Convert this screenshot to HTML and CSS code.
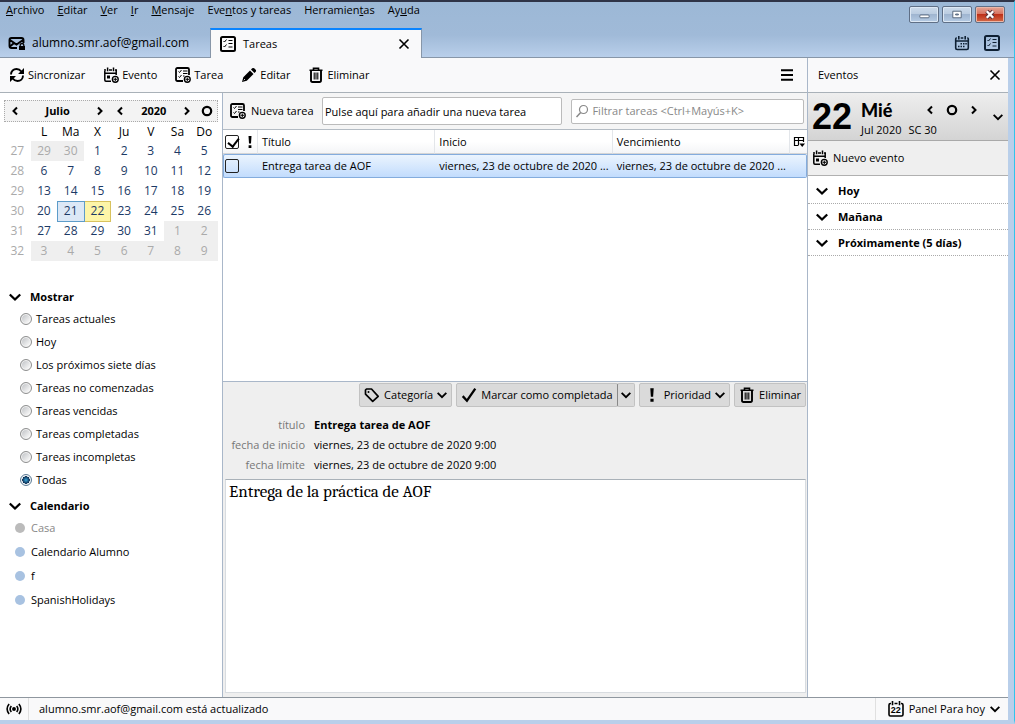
FILE: index.html
```html
<!DOCTYPE html>
<html lang="es">
<head>
  <meta charset="UTF-8" />
  <title>Tareas</title>
  <link rel="stylesheet" href="styles.css">
</head>
<body>
  <!-- Iconos compartidos -->
  <svg class="sprite" aria-hidden="true">
    <symbol id="i-down" viewBox="0 0 12 12"><path d="M.8 3.500 6 8.500l5.200-5" fill="none" stroke="currentColor" stroke-width="2.300"/></symbol>
    <symbol id="i-left" viewBox="0 0 12 12"><path d="M8 2.500 4.500 6 8 9.500" fill="none" stroke="currentColor" stroke-width="2"/></symbol>
    <symbol id="i-right" viewBox="0 0 12 12"><path d="M4 2.500 7.500 6 4 9.500" fill="none" stroke="currentColor" stroke-width="2"/></symbol>
    <symbol id="i-circle" viewBox="0 0 12 12"><circle cx="6" cy="6" r="4.200" fill="none" stroke="currentColor" stroke-width="2.200"/></symbol>
    <symbol id="i-close" viewBox="0 0 12 12"><path d="M1.500 1.500l9 9M10.500 1.500l-9 9" fill="none" stroke="currentColor" stroke-width="1.600"/></symbol>
    <symbol id="i-task" viewBox="0 0 16 16"><rect x="1" y="1" width="14" height="14" rx="1.500" fill="none" stroke="currentColor" stroke-width="2"/><path d="M3.500 5l1 1 2-2.500M3.500 10l1 1 2-2.500M8.500 4.500h4M8.500 7.500h4M8.500 11h4" fill="none" stroke="currentColor"/></symbol>
    <symbol id="i-newtask" viewBox="0 0 16 16"><path d="M8 14H2.500Q1 14 1 12.500V2.500Q1 1 2.500 1h10Q14 1 14 2.500V8" fill="none" stroke="currentColor" stroke-width="1.800"/><path d="M3.500 4.500l1 1 2-2.500M3.500 9.500l1 1 2-2.500M8 4h4.500M8 6.500h4.500M8 9h1.500" fill="none" stroke="currentColor"/><circle cx="12.300" cy="12.300" r="2.900" fill="none" stroke="currentColor" stroke-width="1.400"/><path d="M12.300 10.500v3.600M10.500 12.300h3.600" stroke="currentColor"/></symbol>
    <symbol id="i-newevent" viewBox="0 0 16 16"><path d="M8 14.200H3Q1.800 14.200 1.800 13V4M13.200 3V8M1 3h2M6 3h3M12 3h2M4.600.5v3.700M10.500.5v3.700M2 6.200h11" fill="none" stroke="currentColor" stroke-width="1.500"/><path d="M4 8.500h3v3H4z" fill="currentColor"/><circle cx="12.300" cy="12.300" r="2.900" fill="none" stroke="currentColor" stroke-width="1.400"/><path d="M12.300 10.500v3.600M10.500 12.300h3.600" stroke="currentColor"/></symbol>
    <symbol id="i-calendar" viewBox="0 0 16 16"><path d="M2.800 3H2.500Q1.700 3 1.700 4v9q0 1.500 1.500 1.500h9.600q1.500 0 1.500-1.500V4q0-1-.8-1h-.3M1.700 6h12.600M4.800 1v3.500M11.200 1v3.500M6.700 3h2.600" fill="none" stroke="currentColor" stroke-width="1.600"/><path d="M6.500 8h1.500v1.500H6.500zM9 8h1.500v1.500H9zM11.300 8h1.500v1.500h-1.500zM4 10.700h1.500v1.500H4zM6.500 10.700h1.500v1.500H6.500zM9 10.700h1.500v1.500H9z" fill="currentColor"/></symbol>
    <symbol id="i-today" viewBox="0 0 16 16"><path d="M3 2.500H2.500Q1 2.500 1 4v9.500Q1 15 2.500 15h11q1.500 0 1.500-1.500V4q0-1.500-1.500-1.500H13M4.500 0v4.200M11.500 0v4.200M6.500 2.500h3" fill="none" stroke="currentColor" stroke-width="1.600"/></symbol>
    <symbol id="i-trash" viewBox="0 0 16 16"><path d="M1.500 3.200h13M5.500 3V1.300h5V3" fill="none" stroke="currentColor" stroke-width="1.600"/><path d="M3 3.500v9.700Q3 15 4.500 15h7q1.500 0 1.500-1.800V3.500" fill="none" stroke="currentColor" stroke-width="1.900"/><path d="M6.200 5.500v7M8 5.500v7M9.800 5.500v7" stroke="currentColor" stroke-width="1.100"/></symbol>
    <symbol id="i-sync" viewBox="0 0 16 16"><path d="M2 7.500C2 4 4.500 2 7.500 2c2.200 0 3.700 1 4.800 2.500M14 8.500C14 12 11.500 14 8.500 14c-2.200 0-3.700-1-4.800-2.500" fill="none" stroke="currentColor" stroke-width="1.900"/><path d="M15 1v6H9zM1 15V9h6z" fill="currentColor"/></symbol>
    <symbol id="i-pencil" viewBox="0 0 16 16"><path d="M1 15l1.300-4.800L9 3.500 12.500 7l-6.700 6.700zM10 2.500l1.200-1.200q1-.8 2 0l1.500 1.500q.8 1 0 2L13.500 6z" fill="currentColor"/><path d="M2.800 13.200l1-1" stroke="#fff"/></symbol>
    <symbol id="i-mail" viewBox="0 0 18 16"><path d="M9 13H3.500Q1.500 13 1.500 11V5q0-2 2-2h10q2 0 2 2v3M2 5l6.500 4.500L15 5M2 11.500L6 8" fill="none" stroke="currentColor" stroke-width="1.900"/><path d="M11 11h6v4h-6z" fill="currentColor"/><path d="M12.200 11.500V10q0-1.500 1.800-1.500T15.800 10v1.500" fill="none" stroke="currentColor" stroke-width="1.300"/></symbol>
    <symbol id="i-menu" viewBox="0 0 12 12"><path d="M0 1.200h12M0 6h12M0 10.800h12" stroke="currentColor" stroke-width="1.900"/></symbol>
    <symbol id="i-tag" viewBox="0 0 16 16"><path d="M1.500 3v4.200l7.200 7.200 5.500-5L7.500 2H2.500z" fill="none" stroke="currentColor" stroke-width="1.700" stroke-linejoin="round"/><circle cx="4.500" cy="5" r="1" fill="currentColor"/></symbol>
    <symbol id="i-check" viewBox="0 0 14 14"><path d="M1.500 8l3.700 4L12.500 1.500" fill="none" stroke="currentColor" stroke-width="2"/></symbol>
    <symbol id="i-bang" viewBox="0 0 6 14"><path d="M1.500 1h3L4 8.500H2zM1.600 10.300h2.800V13H1.600z" fill="currentColor"/></symbol>
    <symbol id="i-search" viewBox="0 0 14 14"><circle cx="8.500" cy="5.500" r="4" fill="none" stroke="currentColor" stroke-width="1.200"/><path d="M5.700 8.500L1.500 13" stroke="currentColor" stroke-width="1.500"/></symbol>
    <symbol id="i-columns" viewBox="0 0 12 12"><path d="M5.500 9.500h-4v-8h9V6M1.500 4.500h9M5.500 2v7" fill="none" stroke="currentColor" stroke-width="1.200"/><path d="M6.500 7.500H12L9.200 11z" fill="currentColor"/></symbol>
    <symbol id="i-signal" viewBox="0 0 18 14"><circle cx="9" cy="7" r="2.200" fill="currentColor"/><path d="M6 3.500q-2.700 3.500 0 7M12 3.500q2.700 3.500 0 7M3.500 1.500q-4.500 5.500 0 11M14.500 1.500q4.500 5.500 0 11" fill="none" stroke="currentColor" stroke-width="1.800"/></symbol>
  </svg>

  <header class="titlebar">
    <nav class="menubar">
      <a href="#"><u>A</u>rchivo</a>
      <a href="#"><u>E</u>ditar</a>
      <a href="#"><u>V</u>er</a>
      <a href="#"><u>I</u>r</a>
      <a href="#"><u>M</u>ensaje</a>
      <a href="#">Eve<u>n</u>tos y tareas</a>
      <a href="#">Herramien<u>t</u>as</a>
      <a href="#">Ay<u>u</u>da</a>
    </nav>
    <div class="tabs">
      <button class="tab mail-tab"><svg class="icon-mail"><use href="#i-mail"/></svg>alumno.smr.aof@gmail.com</button>
      <div class="tab tab-active">
        <button class="tab-label"><svg class="icon"><use href="#i-task"/></svg>Tareas</button>
        <button class="tab-close" aria-label="Cerrar pestaña"><svg class="icon-sm"><use href="#i-close"/></svg></button>
      </div>
    </div>
    <div class="window-side">
      <div class="window-buttons">
        <button aria-label="Minimizar"><svg viewBox="0 0 30 16"><rect x="10.500" y="8.500" width="10" height="3" rx="1" fill="#fff" stroke="#54647a"/></svg></button>
        <button aria-label="Maximizar"><svg viewBox="0 0 30 16"><path d="M10.500 4.500h9v7h-9zM13.500 7.500h3v1h-3z" fill="#fff" fill-rule="evenodd" stroke="#54647a"/></svg></button>
        <button class="win-close" aria-label="Cerrar"><svg viewBox="0 0 30 16"><path d="M11.500 4.500l7 7M18.500 4.500l-7 7" stroke="#57323a" stroke-width="4.500"/><path d="M11.500 4.500l7 7M18.500 4.500l-7 7" stroke="#fff" stroke-width="2.500"/></svg></button>
      </div>
      <div class="tab-tools">
        <button aria-label="Calendario"><svg class="icon"><use href="#i-calendar"/></svg></button>
        <button aria-label="Tareas"><svg class="icon"><use href="#i-task"/></svg></button>
      </div>
    </div>
  </header>

  <main class="workspace">
    <div class="tasks">
      <div class="toolbar">
        <button><svg class="icon"><use href="#i-sync"/></svg>Sincronizar</button>
        <button><svg class="icon"><use href="#i-newevent"/></svg>Evento</button>
        <button><svg class="icon"><use href="#i-newtask"/></svg>Tarea</button>
        <button><svg class="icon"><use href="#i-pencil"/></svg>Editar</button>
        <button><svg class="icon"><use href="#i-trash"/></svg>Eliminar</button>
        <button class="app-menu" aria-label="Menú"><svg class="icon-sm"><use href="#i-menu"/></svg></button>
      </div>

      <div class="panes">
        <aside class="sidebar">
          <div class="month-header">
            <button aria-label="Mes anterior"><svg class="icon-sm"><use href="#i-left"/></svg></button>
            <span class="month-name">Julio</span>
            <button aria-label="Mes siguiente"><svg class="icon-sm"><use href="#i-right"/></svg></button>
            <button aria-label="Año anterior"><svg class="icon-sm"><use href="#i-left"/></svg></button>
            <span class="year-name">2020</span>
            <button aria-label="Año siguiente"><svg class="icon-sm"><use href="#i-right"/></svg></button>
            <button aria-label="Hoy"><svg class="icon-sm"><use href="#i-circle"/></svg></button>
          </div>
          <table class="month">
            <thead>
              <tr><th></th><th>L</th><th>Ma</th><th>X</th><th>Ju</th><th>V</th><th>Sa</th><th>Do</th></tr>
            </thead>
            <tbody>
              <tr><th>27</th><td class="other">29</td><td class="other">30</td><td>1</td><td>2</td><td>3</td><td>4</td><td>5</td></tr>
              <tr><th>28</th><td>6</td><td>7</td><td>8</td><td>9</td><td>10</td><td>11</td><td>12</td></tr>
              <tr><th>29</th><td>13</td><td>14</td><td>15</td><td>16</td><td>17</td><td>18</td><td>19</td></tr>
              <tr><th>30</th><td>20</td><td class="today">21</td><td class="selected">22</td><td>23</td><td>24</td><td>25</td><td>26</td></tr>
              <tr><th>31</th><td>27</td><td>28</td><td>29</td><td>30</td><td>31</td><td class="other">1</td><td class="other">2</td></tr>
              <tr><th>32</th><td class="other">3</td><td class="other">4</td><td class="other">5</td><td class="other">6</td><td class="other">7</td><td class="other">8</td><td class="other">9</td></tr>
            </tbody>
          </table>

          <button class="section-title"><svg class="icon-sm"><use href="#i-down"/></svg>Mostrar</button>
          <div class="filters">
            <label><input type="radio" name="filter">Tareas actuales</label>
            <label><input type="radio" name="filter">Hoy</label>
            <label><input type="radio" name="filter">Los próximos siete días</label>
            <label><input type="radio" name="filter">Tareas no comenzadas</label>
            <label><input type="radio" name="filter">Tareas vencidas</label>
            <label><input type="radio" name="filter">Tareas completadas</label>
            <label><input type="radio" name="filter">Tareas incompletas</label>
            <label><input type="radio" name="filter" checked>Todas</label>
          </div>

          <button class="section-title"><svg class="icon-sm"><use href="#i-down"/></svg>Calendario</button>
          <ul class="calendars">
            <li class="disabled">Casa</li>
            <li>Calendario Alumno</li>
            <li>f</li>
            <li>SpanishHolidays</li>
          </ul>
        </aside>

        <section class="content">
          <div class="task-list">
            <div class="quick-add">
              <button class="new-task"><svg class="icon"><use href="#i-newtask"/></svg>Nueva tarea</button>
              <input class="add-input" type="text" aria-label="Nueva tarea" value="Pulse aquí para añadir una nueva tarea">
              <div class="search">
                <svg class="icon-search"><use href="#i-search"/></svg>
                <input type="text" aria-label="Filtrar tareas" placeholder="Filtrar tareas &lt;Ctrl+Mayús+K&gt;">
              </div>
            </div>
            <table class="tree">
              <colgroup><col class="c-check"><col class="c-prio"><col><col><col><col class="c-pick"></colgroup>
              <thead>
                <tr>
                  <th><input type="checkbox" aria-label="Completada" checked></th>
                  <th><svg class="icon-bang"><use href="#i-bang"/></svg></th>
                  <th>Título</th>
                  <th>Inicio</th>
                  <th>Vencimiento</th>
                  <th><button aria-label="Columnas"><svg class="icon-sm"><use href="#i-columns"/></svg></button></th>
                </tr>
              </thead>
              <tbody>
                <tr>
                  <td><input type="checkbox" aria-label="Entrega tarea de AOF"></td>
                  <td></td>
                  <td>Entrega tarea de AOF</td>
                  <td>viernes, 23 de octubre de 2020 ...</td>
                  <td>viernes, 23 de octubre de 2020 ...</td>
                  <td></td>
                </tr>
              </tbody>
            </table>
          </div>

          <div class="details">
            <div class="actions">
              <button><svg class="icon"><use href="#i-tag"/></svg>Categoría<svg class="caret"><use href="#i-down"/></svg></button>
              <div class="split">
                <button><svg class="icon"><use href="#i-check"/></svg>Marcar como completada</button>
                <button aria-label="Más opciones"><svg class="caret"><use href="#i-down"/></svg></button>
              </div>
              <button><svg class="icon"><use href="#i-bang"/></svg>Prioridad<svg class="caret"><use href="#i-down"/></svg></button>
              <button><svg class="icon"><use href="#i-trash"/></svg>Eliminar</button>
            </div>
            <dl class="fields">
              <dt>título</dt><dd class="task-name">Entrega tarea de AOF</dd>
              <dt>fecha de inicio</dt><dd>viernes, 23 de octubre de 2020 9:00</dd>
              <dt>fecha límite</dt><dd>viernes, 23 de octubre de 2020 9:00</dd>
            </dl>
            <textarea class="description" aria-label="Descripción" spellcheck="false">Entrega de la práctica de AOF</textarea>
          </div>
        </section>
      </div>
    </div>

    <aside class="today-pane">
      <div class="pane-title">Eventos<button aria-label="Cerrar panel"><svg class="icon-sm"><use href="#i-close"/></svg></button></div>
      <div class="day-header">
        <span class="day-number">22</span>
        <div class="day-info">
          <div class="day-top">
            <span class="weekday">Mié</span>
            <div class="day-nav">
              <button aria-label="Día anterior"><svg class="icon-sm"><use href="#i-left"/></svg></button>
              <button aria-label="Hoy"><svg class="icon-sm"><use href="#i-circle"/></svg></button>
              <button aria-label="Día siguiente"><svg class="icon-sm"><use href="#i-right"/></svg></button>
            </div>
          </div>
          <div class="day-sub"><span>Jul 2020</span><span>SC 30</span></div>
        </div>
        <button class="day-more" aria-label="Mostrar minicalendario"><svg class="caret"><use href="#i-down"/></svg></button>
      </div>
      <button class="new-event"><svg class="icon"><use href="#i-newevent"/></svg>Nuevo evento</button>
      <div class="agenda">
        <button><svg class="icon-sm"><use href="#i-down"/></svg>Hoy</button>
        <button><svg class="icon-sm"><use href="#i-down"/></svg>Mañana</button>
        <button><svg class="icon-sm"><use href="#i-down"/></svg>Próximamente (5 días)</button>
      </div>
    </aside>
  </main>

  <footer class="statusbar">
    <span class="status-icon"><svg class="icon-signal"><use href="#i-signal"/></svg></span>
    <span class="status-text">alumno.smr.aof@gmail.com está actualizado</span>
    <button class="today-toggle">
      <span class="today-icon"><svg class="icon"><use href="#i-today"/></svg><b>22</b></span>
      Panel Para hoy
      <svg class="caret"><use href="#i-down"/></svg>
    </button>
  </footer>
</body>
</html>
```
FILE: styles.css
```css
* {
  box-sizing: border-box;
}

body {
  margin: 0;
  height: 100vh;
  display: flex;
  flex-direction: column;
  border-top: 2px solid #2f3447;
  border-right: 1px solid #2fc4ec;
  border-bottom: 4px solid #b9cfea;
  background-color: #b9cfea;
  padding-right: 6px;
  color: #000;
  font-family: 'Segoe UI', 'Open Sans', sans-serif;
  font-size: 11px;
  line-height: 16px;
  overflow: hidden;
}

button,
input {
  font: inherit;
  color: inherit;
}

button {
  display: flex;
  align-items: center;
  border: none;
  padding: 0;
  background: none;
  white-space: nowrap;
}

svg {
  display: block;
  flex: none;
}

.sprite {
  position: absolute;
  width: 0;
  height: 0;
}

.icon {
  width: 16px;
  height: 16px;
}

.icon-sm {
  width: 12px;
  height: 12px;
}

.caret {
  width: 10px;
  height: 10px;
}

.icon-mail {
  width: 18px;
  height: 16px;
}

.icon-search,
.icon-bang {
  width: 14px;
  height: 14px;
}

.icon-signal {
  width: 16px;
  height: 14px;
}

/* Barra de título */
.titlebar {
  display: grid;
  grid-template-columns: 1fr auto;
  grid-template-rows: 26px 29px;
  margin-right: -6px;
  padding-right: 6px;
  border-bottom: 1px solid #8796a8;
  background: linear-gradient(#9cb8d6, #a0bad8 60%, #b9cfea);
  height: 56px;
}

.menubar {
  display: flex;
  gap: 13px;
  padding-left: 6px;
}

.menubar a {
  color: inherit;
  text-decoration: none;
}

.tabs {
  grid-row: 2;
  display: flex;
}

.tab {
  display: flex;
  align-items: center;
  height: 30px;
}

.mail-tab {
  width: 210px;
  gap: 6px;
  padding-left: 8px;
  font-size: 12px;
}

.tab-active {
  width: 212px;
  justify-content: space-between;
  padding: 0 11px 0 9px;
  border: 1px solid #8796a8;
  border-top: 2px solid #0a84ff;
  border-bottom: none;
  background-color: #f9f9fa;
}

.tab-label {
  gap: 7px;
}

.window-side {
  grid-column: 2;
  grid-row: 1 / 3;
  display: flex;
  flex-direction: column;
  justify-content: space-between;
  align-items: flex-end;
  padding: 4px 3px 6px 0;
}

.window-buttons {
  display: flex;
  gap: 3px;
}

.window-buttons button {
  width: 30px;
  height: 17px;
  border: 1px solid #5f6f86;
  border-radius: 2px;
  background: linear-gradient(#cddbeb, #b9cbe0 50%, #9fb5d0 50%, #b5cbe4);
  box-shadow: inset 0 0 0 1px #dde8f4;
}

.window-buttons svg {
  width: 28px;
  height: 15px;
}

.window-buttons .win-close {
  background: linear-gradient(#e3a596, #d6705c 50%, #bd3018 50%, #d46a48);
  box-shadow: inset 0 0 0 1px #eab7a8;
}

.tab-tools {
  display: flex;
  gap: 14px;
  padding-right: 5px;
  color: #0f2033;
}

/* Estructura principal */
.workspace {
  flex: 1;
  min-height: 0;
  display: flex;
  background-color: #fff;
}

.tasks {
  flex: 1;
  min-width: 0;
  display: flex;
  flex-direction: column;
}

.toolbar {
  display: flex;
  align-items: center;
  gap: 18px;
  height: 35px;
  padding: 0 14px 0 9px;
  border-bottom: 1px solid #a9b1b8;
  background-color: #f9f9fa;
}

.toolbar button {
  gap: 3px;
}

.toolbar .app-menu {
  margin-left: auto;
}

.panes {
  flex: 1;
  min-height: 0;
  display: flex;
}

.sidebar {
  width: 223px;
  flex: none;
  padding: 7px 4px 0;
  border-right: 1px solid #a9b7c9;
}

/* Calendario mensual */
.month-header {
  display: flex;
  align-items: center;
  height: 22px;
  padding: 0 4px;
  border: 1px dotted #aaa;
  background-color: #f3f3f3;
  font-weight: bold;
}

.month-name,
.year-name {
  flex: 74 1 0;
  text-align: center;
}

.year-name {
  flex-grow: 55;
}

.month-header button + button {
  margin-left: 8px;
}

.month {
  width: 100%;
  border-collapse: collapse;
  table-layout: fixed;
  font-size: 12px;
  text-align: center;
}

.month th,
.month td {
  height: 20px;
  padding: 0;
  font-weight: normal;
}

.month thead th {
  height: 19px;
}

.month td {
  color: #1c3a66;
}

.month tbody th,
.month .other {
  color: #aaa;
}

.month .other {
  background-color: #efefef;
}

.month .today {
  border: 1px solid #5d9cc9;
  background-color: #dce8f6;
}

.month .selected {
  border: 1px solid #d8c25e;
  background-color: #fdf5a8;
}

.section-title {
  gap: 9px;
  height: 21px;
  padding-left: 5px;
  font-weight: bold;
}

.month + .section-title {
  margin-top: 25px;
}

.filters label {
  display: flex;
  align-items: center;
  gap: 4px;
  height: 23px;
  padding-left: 16px;
}

.filters input {
  appearance: none;
  width: 12px;
  height: 12px;
  margin: 0;
  border: 1px solid #8e8f8f;
  border-radius: 50%;
  background: linear-gradient(135deg, #b9bcc0, #f6f6f6 80%);
  box-shadow: inset 0 0 0 1px #f4f4f4;
}

.filters input:checked {
  border-color: #5d7c96;
  background: radial-gradient(#3aa6d8, #0d2f55 50%, #e4eff6 55%);
}

.filters + .section-title {
  margin-top: 4px;
}

.calendars {
  list-style: none;
  margin: 0;
  padding: 0 0 0 11px;
}

.calendars li {
  display: flex;
  align-items: center;
  gap: 6px;
  height: 24px;
}

.calendars li::before {
  content: '';
  width: 10px;
  height: 10px;
  border-radius: 50%;
  background-color: #a8c2e1;
}

.calendars .disabled {
  color: #888;
}

.calendars .disabled::before {
  background-color: #bbb;
}

/* Lista de tareas */
.content {
  flex: 1;
  min-width: 0;
  display: flex;
  flex-direction: column;
}

.task-list {
  flex: 291 1 0;
  min-height: 0;
}

.quick-add {
  display: flex;
  align-items: center;
  height: 37px;
  padding: 0 3px 0 7px;
  border-bottom: 1px solid #b4bcc4;
  background-color: #f5f5f5;
}

.new-task {
  gap: 5px;
  width: 92px;
}

.add-input,
.search {
  border: 1px solid #bbb;
  border-radius: 2px;
  background-color: #fff;
}

.add-input {
  flex: 240 1 0;
  min-width: 0;
  height: 28px;
  margin-right: 9px;
  padding: 0 2px;
}

.search {
  flex: 233 1 0;
  min-width: 0;
  display: flex;
  align-items: center;
  gap: 3px;
  height: 25px;
  padding-left: 3px;
  color: #888;
}

.search input {
  flex: 1;
  min-width: 0;
  border: none;
  padding: 0;
  background: none;
}

.search input::placeholder {
  color: #888;
}

.tree {
  width: 100%;
  table-layout: fixed;
  border-collapse: separate;
  border-spacing: 0;
}

.c-check {
  width: 19px;
}

.c-prio {
  width: 16px;
}

.c-pick {
  width: 17px;
}

.tree th,
.tree td {
  height: 24px;
  padding: 0 0 0 4px;
  text-align: left;
  font-weight: normal;
  white-space: nowrap;
  overflow: hidden;
}

.tree th {
  border-right: 1px solid #e3e6ea;
  border-bottom: 1px solid #d5d5d5;
  background: linear-gradient(#fff 50%, #f4f5f7);
}

.tree th:nth-child(-n+2),
.tree td:nth-child(-n+2) {
  padding: 0 1px;
}

.tree th:first-child {
  border-right: none;
}

.tree th:last-child {
  padding: 0 0 0 3px;
  border-right: none;
}

.tree td {
  border: 1px solid #84acdd;
  border-width: 1px 0;
  background: linear-gradient(#ebf4fe, #c2dcfd);
}

.tree td:first-child {
  border-left-width: 1px;
  border-radius: 2px 0 0 2px;
  padding: 0;
}

.tree td:last-child {
  border-right-width: 1px;
  border-radius: 0 2px 2px 0;
}

.tree input {
  appearance: none;
  display: block;
  width: 14px;
  height: 14px;
  margin: 0 1px;
  border: 1px solid #222;
  border-radius: 2px;
}

.tree input:checked::before {
  content: '';
  display: block;
  width: 5px;
  height: 9px;
  margin: 0 0 0 4px;
  border: solid #000;
  border-width: 0 2px 2px 0;
  transform: rotate(38deg);
}

/* Detalles de la tarea */
.details {
  flex: 314 1 0;
  min-height: 0;
  display: flex;
  flex-direction: column;
  padding: 1px 1px 4px 2px;
  border-top: 1px solid #a9b7c9;
  background-color: #efefef;
}

.actions {
  display: flex;
  justify-content: flex-end;
  gap: 4px;
}

.actions button {
  gap: 4px;
  height: 24px;
  padding: 0 4px;
  border: 1px solid #c2c2c2;
  border-radius: 2px;
  background-color: #dadada;
}

.split {
  display: flex;
}

.split button + button {
  margin-left: -1px;
  padding: 0 3px;
  border-left-color: #888;
}

.fields {
  display: grid;
  grid-template-columns: 80px 1fr;
  grid-auto-rows: 20px;
  align-items: center;
  column-gap: 9px;
  margin: 8px 0 4px;
}

.fields dt {
  color: #777;
  text-align: right;
  white-space: nowrap;
}

.fields dd {
  margin: 0;
}

.fields .task-name {
  font-weight: bold;
}

.description {
  flex: 1;
  resize: none;
  margin: 0;
  padding: 2px 3px;
  border: 1px solid #d8dce0;
  border-top-color: #a9b1b8;
  background-color: #fff;
  font: 17px/20px Cambria, 'Liberation Serif', serif;
}

/* Panel de hoy */
.today-pane {
  width: 201px;
  flex: none;
  border-left: 1px solid #a9b7c9;
}

.pane-title {
  display: flex;
  align-items: center;
  justify-content: space-between;
  height: 35px;
  padding: 0 7px 0 10px;
  border-bottom: 1px solid #a9b1b8;
  background-color: #f9f9fa;
}

.day-header {
  display: flex;
  align-items: center;
  height: 48px;
  padding: 0 5px 0 4px;
  border-bottom: 1px solid #a9a9a9;
  background: linear-gradient(#eee, #d4d4d4);
}

.day-number {
  width: 49px;
  font: bold 36px/40px 'Liberation Sans', sans-serif;
}

.day-info {
  flex: 1;
  padding-top: 2px;
}

.day-top {
  display: flex;
  align-items: center;
  justify-content: space-between;
}

.weekday {
  font: 900 18px/24px Lato, sans-serif;
}

.day-nav {
  display: flex;
  gap: 10px;
  padding-right: 13px;
}

.day-sub {
  display: flex;
  gap: 7px;
}

.new-event {
  width: 100%;
  height: 35px;
  gap: 5px;
  padding-left: 4px;
  border-bottom: 1px solid #b0b0b0;
  background-color: #efefef;
}

.agenda {
  padding-top: 2px;
}

.agenda button {
  width: 100%;
  height: 26px;
  gap: 10px;
  padding-left: 8px;
  border-bottom: 1px dotted #aaa;
  font-weight: bold;
}

/* Barra de estado */
.statusbar {
  display: flex;
  align-items: center;
  height: 23px;
  border-top: 1px solid #8f979f;
  background-color: #f9f9fa;
}

.status-icon {
  width: 29px;
  padding: 4px 6px;
  border-right: 1px solid #e0e0e0;
}

.status-text {
  flex: 1;
  padding-left: 10px;
}

.today-toggle {
  height: 22px;
  gap: 5px;
  padding: 0 8px 0 12px;
  border-left: 1px solid #e0e0e0;
}

.today-icon {
  position: relative;
}

.today-icon b {
  position: absolute;
  inset: 4px 0 0;
  text-align: center;
  font: bold 9px/10px 'Liberation Sans', sans-serif;
}
```
